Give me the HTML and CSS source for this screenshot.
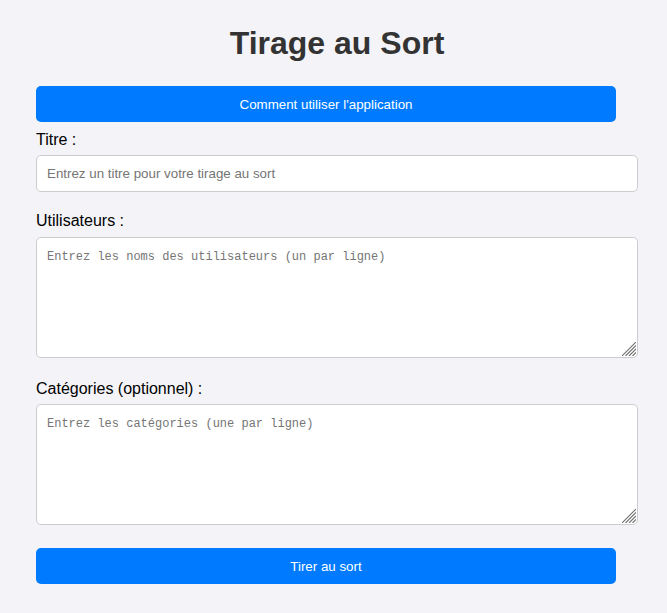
FILE: index.html
```html
<!DOCTYPE html>
<html lang="fr">
<head>
<meta charset="utf-8">
<title>Tirage au Sort</title>
<link rel="stylesheet" href="styles.css">
</head>
<body>
<div class="container">
  <h1 class="title">Tirage au Sort</h1>
  <button class="btn btn-help" type="button">Comment utiliser l'application</button>
  <label class="field-label label-titre" for="titre">Titre :</label>
  <input class="field-input" id="titre" type="text" placeholder="Entrez un titre pour votre tirage au sort">
  <label class="field-label label-users" for="users">Utilisateurs :</label>
  <div class="area-wrap area-users">
    <textarea class="field-area" id="users" placeholder="Entrez les noms des utilisateurs (un par ligne)"></textarea>
    <svg class="grip" width="14" height="14" viewBox="0 0 14 14" aria-hidden="true">
      <path d="M14 0L0 14M14 3.5L3.5 14M14 7L7 14M14 10.5L10.5 14" stroke="#707070" stroke-width="1.1" fill="none"/>
    </svg>
  </div>
  <label class="field-label label-cats" for="cats">Catégories (optionnel) :</label>
  <div class="area-wrap area-cats">
    <textarea class="field-area" id="cats" placeholder="Entrez les catégories (une par ligne)"></textarea>
    <svg class="grip" width="14" height="14" viewBox="0 0 14 14" aria-hidden="true">
      <path d="M14 0L0 14M14 3.5L3.5 14M14 7L7 14M14 10.5L10.5 14" stroke="#707070" stroke-width="1.1" fill="none"/>
    </svg>
  </div>
  <button class="btn btn-draw" type="button">Tirer au sort</button>
</div>
</body>
</html>
```
FILE: styles.css
```css
html, body {
  margin: 0;
  padding: 0;
  background: #f4f4f8;
}

body {
  font-family: "Liberation Sans", Arial, sans-serif;
  color: #000;
}

.container {
  width: 602px;
  margin-left: 36px;
  padding-top: 25px;
  display: flex;
  flex-direction: column;
  align-items: flex-start;
}

.title {
  align-self: stretch;
  margin: 0 0 24px;
  font-size: 32px;
  line-height: 37px;
  font-weight: bold;
  color: #333;
  text-align: center;
}

.btn {
  width: 580px;
  height: 36px;
  border: none;
  border-radius: 5px;
  background: #007bff;
  color: #fff;
  font-family: "Liberation Sans", Arial, sans-serif;
  font-size: 13.33px;
  padding: 0;
  cursor: pointer;
}

.btn-help {
  margin-bottom: 9px;
}

.field-label {
  display: block;
  font-size: 16px;
  line-height: 18px;
}

.label-titre { margin-bottom: 6px; }
.label-users { margin-bottom: 7px; }
.label-cats { margin-bottom: 6px; }

.field-input,
.field-area {
  box-sizing: border-box;
  width: 602px;
  border: 1px solid #ccc;
  border-radius: 5px;
  background: #fff;
  margin: 0;
}

.field-input {
  height: 37px;
  padding: 10px;
  font-family: "Liberation Sans", Arial, sans-serif;
  font-size: 13.33px;
  margin-bottom: 20px;
}

.area-wrap {
  position: relative;
  width: 602px;
  height: 121px;
}

.field-area {
  display: block;
  height: 121px;
  padding: 12px 10px 10px;
  font-family: "Liberation Mono", monospace;
  font-size: 12px;
  resize: none;
}

.grip {
  position: absolute;
  right: 2px;
  bottom: 2px;
  pointer-events: none;
}

.area-users { margin-bottom: 22px; }
.area-cats { margin-bottom: 23px; }

.field-input::placeholder,
.field-area::placeholder {
  color: #757575;
}
```
